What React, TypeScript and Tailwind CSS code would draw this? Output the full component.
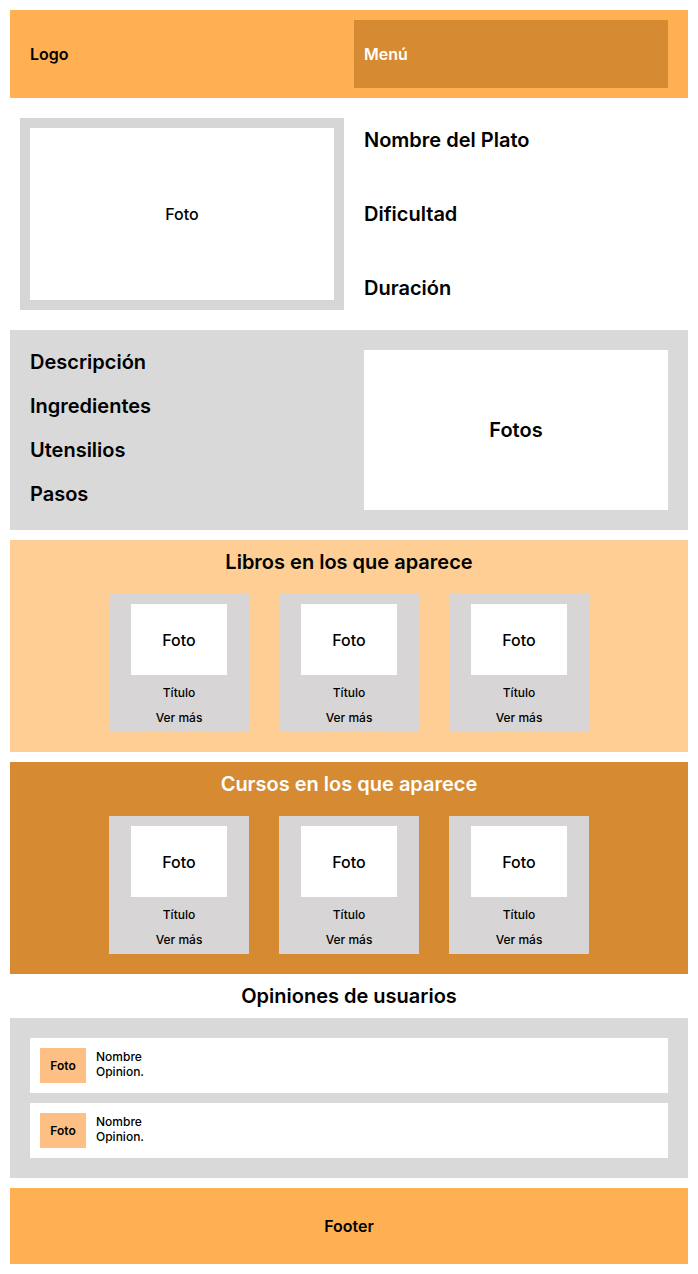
import React from "react";

function Card() {
  return (
    <div className="w-[140px] h-[138px] bg-[#D7D5D6] flex flex-col items-center pt-[10px]">
      <div className="w-[96px] h-[71px] bg-white flex items-center justify-center text-[16px] font-medium text-black">Foto</div>
      <div className="mt-[11px] h-[14px] flex items-center text-[12px] font-medium">Título</div>
      <div className="mt-[11px] h-[14px] flex items-center text-[12px] font-medium">Ver más</div>
    </div>
  );
}

function Opinion() {
  return (
    <div className="h-[55px] bg-white flex items-center px-[10px]">
      <div className="w-[46px] h-[35px] bg-[#FDBF84] flex items-center justify-center text-[12px] font-semibold">Foto</div>
      <div className="ml-[10px] mb-[4px] flex flex-col text-[12px] font-medium leading-[15px]">
        <span>Nombre</span>
        <span>Opinion.</span>
      </div>
    </div>
  );
}

export default function App() {
  return (
    <div className="w-[698px] h-[1274px] bg-white p-[10px] flex flex-col gap-[10px] text-black" style={{ fontFamily: "Inter, 'Noto Sans', sans-serif" }}>
      {/* Header */}
      <div className="h-[88px] bg-[#FEB052] flex items-center py-[10px] pl-[10px] pr-[20px]">
        <div className="flex-1 pl-[10px] text-[16px] font-semibold">Logo</div>
        <div className="w-[314px] h-[68px] bg-[#D68A32] flex items-center pl-[10px] text-[16px] font-semibold text-white">Menú</div>
      </div>

      {/* Plato */}
      <div className="h-[212px] flex items-center px-[10px]">
        <div className="w-[324px] h-[192px] bg-[#D7D6D6] p-[10px]">
          <div className="w-full h-full bg-white flex items-center justify-center text-[16px] font-medium">Foto</div>
        </div>
        <div className="ml-[20px] h-[192px] flex flex-col justify-between pt-[7px] pb-[7px] text-[20px] font-semibold">
          <div>Nombre del Plato</div>
          <div>Dificultad</div>
          <div>Duración</div>
        </div>
      </div>

      {/* Descripción */}
      <div className="h-[200px] bg-[#D9D9D9] flex p-[20px]">
        <div className="flex-1 flex flex-col gap-[21px] text-[20px] font-semibold leading-[23px] pt-[1px]">
          <div>Descripción</div>
          <div>Ingredientes</div>
          <div>Utensilios</div>
          <div>Pasos</div>
        </div>
        <div className="w-[304px] h-[160px] bg-white flex items-center justify-center text-[20px] font-semibold">Fotos</div>
      </div>

      {/* Libros */}
      <div className="h-[212px] bg-[#FECE94] flex flex-col items-center">
        <div className="h-[44px] flex items-center text-[20px] font-semibold">Libros en los que aparece</div>
        <div className="mt-[10px] flex gap-[30px]">
          <Card />
          <Card />
          <Card />
        </div>
      </div>

      {/* Cursos */}
      <div className="h-[212px] bg-[#D68A32] flex flex-col items-center">
        <div className="h-[44px] flex items-center text-[20px] font-semibold text-white">Cursos en los que aparece</div>
        <div className="mt-[10px] flex gap-[30px]">
          <Card />
          <Card />
          <Card />
        </div>
      </div>

      {/* Opiniones */}
      <div className="h-[34px] -mt-[10px] flex items-end justify-center text-[20px] font-semibold leading-[23px]">
        <span>Opiniones de usuarios</span>
      </div>
      <div className="h-[160px] bg-[#D9D9D9] p-[20px] flex flex-col gap-[10px]">
        <Opinion />
        <Opinion />
      </div>

      {/* Footer */}
      <div className="h-[76px] bg-[#FEB052] flex items-center justify-center text-[16px] font-semibold">Footer</div>
    </div>
  );
}
